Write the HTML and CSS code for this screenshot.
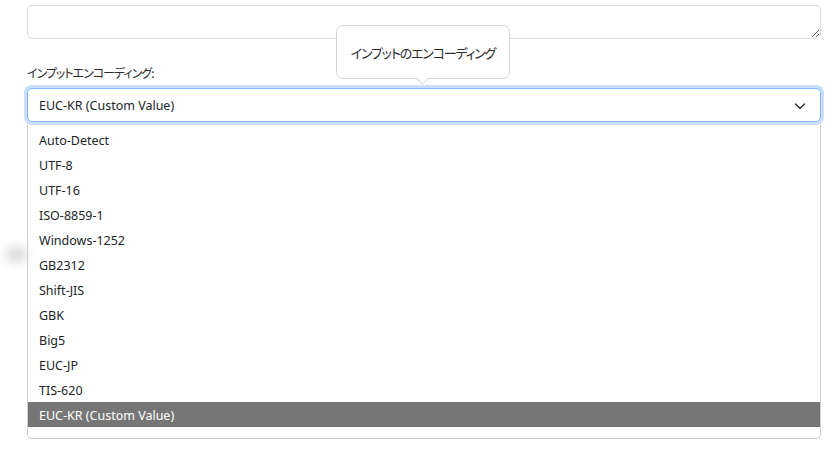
FILE: index.html
```html
<!DOCTYPE html>
<html lang="ja">
<head>
<meta charset="utf-8">
<title>Input encoding</title>
<link rel="stylesheet" href="styles.css">
</head>
<body>
<div class="page">
  <textarea class="text-input"></textarea>
  <div class="field">
    <div class="field-label">インプットエンコーディング:</div>
    <div class="select-box">
      <span class="select-value">EUC-KR (Custom Value)</span>
      <svg class="chevron" viewBox="0 0 16 16" width="16" height="16"><path d="M3.5 6 8 10.5 12.5 6" fill="none" stroke="#343a40" stroke-width="1.6" stroke-linecap="round" stroke-linejoin="round"/></svg>
    </div>
    <div class="tip">インプットのエンコーディング</div>
    <div class="listbox">
      <div class="opt">Auto-Detect</div>
      <div class="opt">UTF-8</div>
      <div class="opt">UTF-16</div>
      <div class="opt">ISO-8859-1</div>
      <div class="opt">Windows-1252</div>
      <div class="opt">GB2312</div>
      <div class="opt">Shift-JIS</div>
      <div class="opt">GBK</div>
      <div class="opt">Big5</div>
      <div class="opt">EUC-JP</div>
      <div class="opt">TIS-620</div>
      <div class="opt opt-selected">EUC-KR (Custom Value)</div>
    </div>
  </div>
  <div class="ghost"></div>
</div>
</body>
</html>
```

FILE: styles.css
```css
html, body {
  margin: 0;
  background: #ffffff;
}
body {
  font-family: "Noto Sans", "Noto Sans CJK JP", sans-serif;
  font-size: 12.5px;
  color: #212529;
}
.page {
  position: relative;
  padding: 5px 16px 0 27px;
}
.text-input {
  display: block;
  box-sizing: border-box;
  width: 100%;
  height: 34px;
  margin: 0;
  border: 1px solid #dcdcdc;
  border-radius: 5px;
  background: #fff;
  resize: vertical;
}
.field {
  position: relative;
  margin-top: 23px;
}
.field-label {
  height: 22px;
  line-height: 22px;
  font-family: "Noto Sans CJK JP", sans-serif;
  font-size: 12px;
  font-feature-settings: "palt";
  letter-spacing: -1px;
  color: #2b2b2b;
}
.select-box {
  box-sizing: border-box;
  margin-top: 4px;
  height: 34px;
  border: 1px solid #86b7fe;
  border-radius: 5px;
  box-shadow: 0 0 0 3px rgba(13, 110, 253, 0.22);
  display: flex;
  align-items: center;
  justify-content: space-between;
  padding: 1px 12px 0 11px;
  background: #fff;
}
.chevron {
  display: block;
}
.tip {
  position: absolute;
  left: 309px;
  top: -37px;
  box-sizing: border-box;
  width: 174px;
  height: 54px;
  border: 1px solid #d6d6d6;
  border-radius: 7px;
  background: #fff;
  font-family: "Noto Sans CJK JP", sans-serif;
  font-size: 13px;
  font-feature-settings: "palt";
  letter-spacing: -1.2px;
  color: #2b2b2b;
  display: flex;
  align-items: center;
  justify-content: center;
}
.tip::after {
  content: "";
  position: absolute;
  left: 81px;
  bottom: -5px;
  width: 8px;
  height: 8px;
  background: #fff;
  border-right: 1px solid #d6d6d6;
  border-bottom: 1px solid #d6d6d6;
  transform: rotate(45deg);
}
.listbox {
  margin-top: 3px;
  box-sizing: border-box;
  height: 314px;
  padding-top: 2px;
  overflow: hidden;
  background: #fff;
  border: 1px solid #cfcfcf;
  border-top: 0;
  border-radius: 0 0 5px 5px;
}
.opt {
  height: 25px;
  line-height: 27px;
  padding-left: 11px;
  white-space: nowrap;
}
.opt-selected {
  background: #767676;
  color: #ffffff;
}
.ghost {
  position: absolute;
  left: 7px;
  top: 247px;
  width: 19px;
  height: 15px;
  background: #dcdcdc;
  filter: blur(5px);
}
```
